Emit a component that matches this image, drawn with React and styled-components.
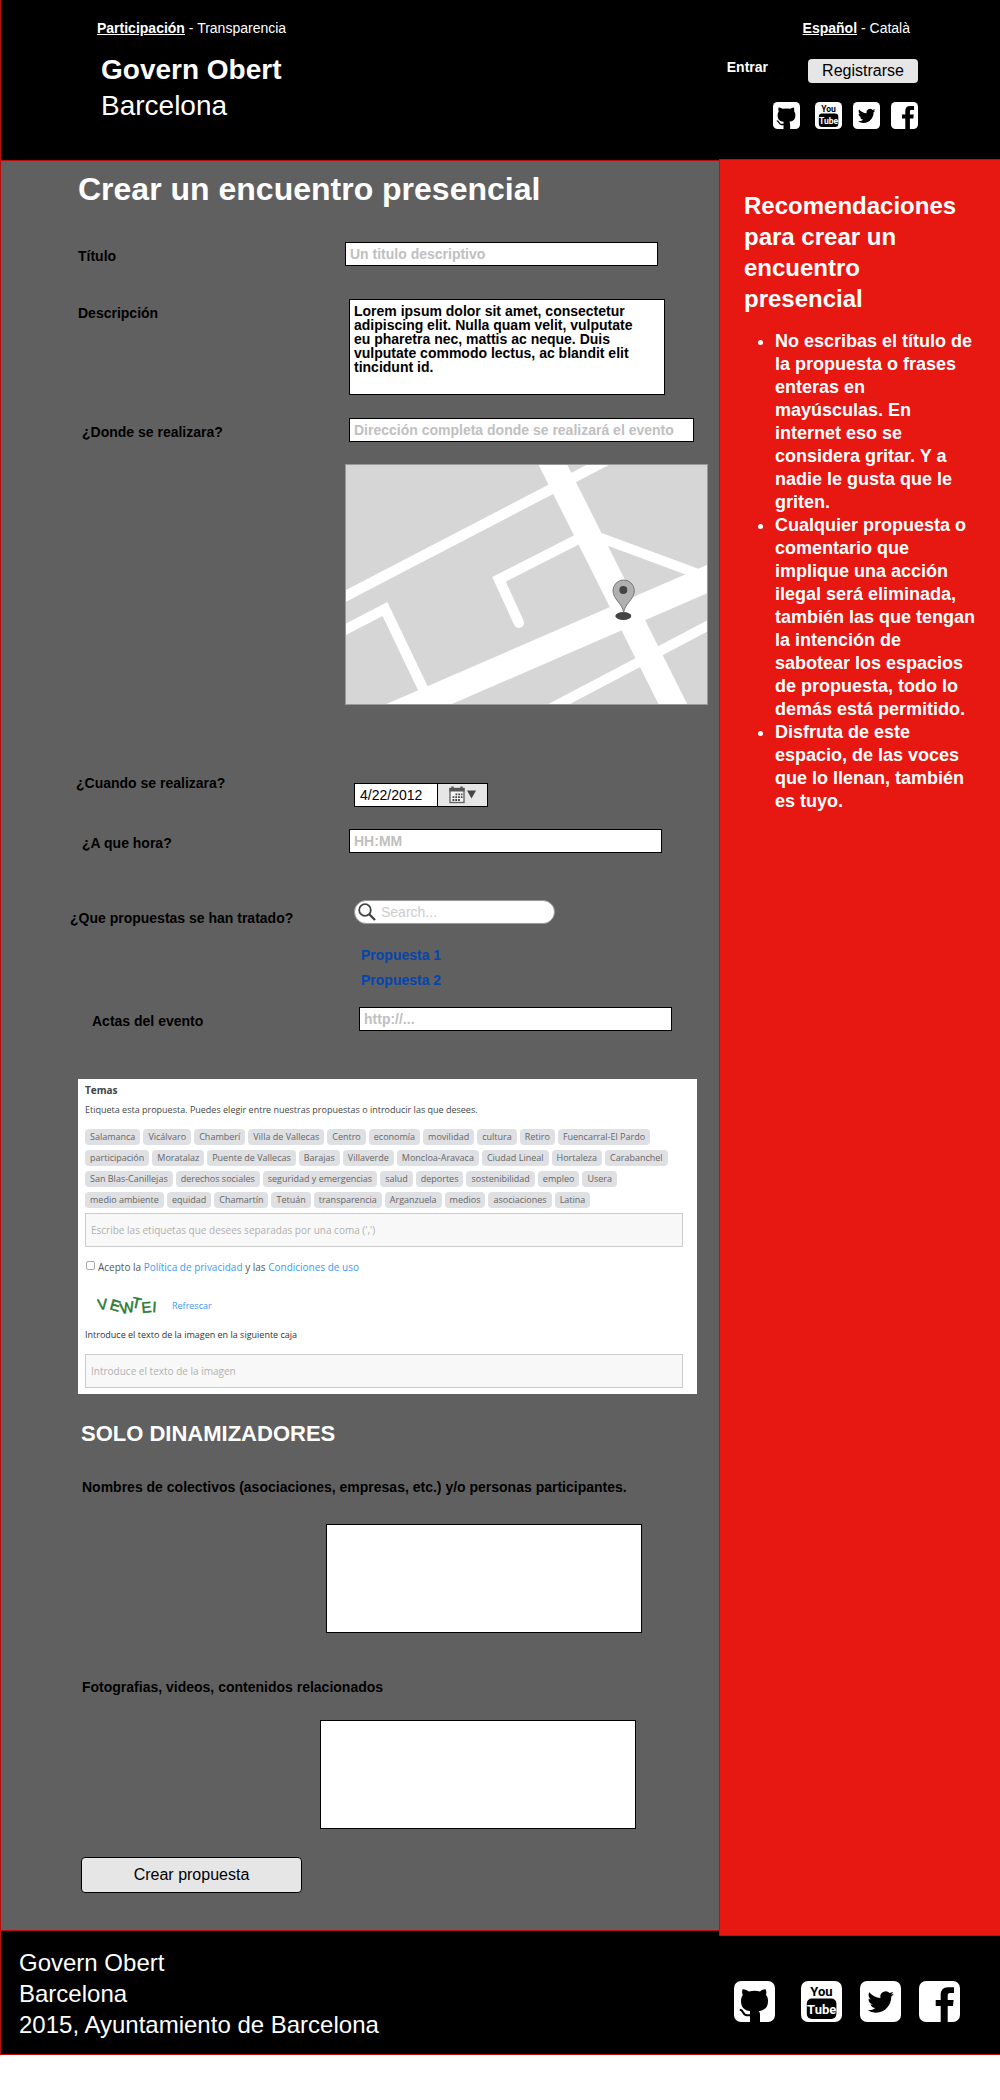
import React from "react";
import styled, { createGlobalStyle } from "styled-components";

const GlobalStyle = createGlobalStyle`
  * { box-sizing: border-box; }
  body {
    margin: 0;
    background: #fff;
    color: #000;
    font: 14px/16px "Liberation Sans", Arial, sans-serif;
  }
  h1, h2, h3, p, ul { margin: 0; padding: 0; }
  input, textarea, button { font-family: inherit; border-radius: 0; }
`;

const line = "#b80d0a";

const Page = styled.div`
  border-left: 1px solid ${line};
`;

/* ---------- header ---------- */

const Header = styled.header`
  display: flex;
  justify-content: space-between;
  height: 161px;
  padding: 20px 82px 0 96px;
  background: #000;
  color: #fff;
  border-bottom: 1px solid ${line};
`;

const Switcher = styled.nav`
  padding-right: ${(p) => (p.$inset ? "8px" : "0")};
  a { color: #fff; text-decoration: none; }
  a[aria-current] { font-weight: bold; text-decoration: underline; }
`;

const Brand = styled.div`
  margin-top: 16px;
  padding-left: 4px;
  font-size: 28px;
  line-height: 36px;
`;

const HeaderTools = styled.div`
  display: flex;
  flex-direction: column;
  align-items: flex-end;
`;

const Account = styled.div`
  display: flex;
  align-items: flex-start;
  gap: 40px;
  margin: 23px 0 19px;
`;

const LoginLink = styled.a`
  color: #fff;
  font-weight: bold;
  text-decoration: none;
`;

const Button = styled.button`
  width: ${(p) => p.$width};
  height: ${(p) => p.$height};
  padding: 0;
  border: ${(p) => (p.$outlined ? "1px solid #000" : "0")};
  border-radius: 4px;
  background: #e6e6e6;
  color: #000;
  font-size: 16px;
`;

const SocialList = styled.ul`
  display: flex;
  gap: ${(p) => p.$gap};
  list-style: none;
  li:first-child { margin-right: ${(p) => p.$lead}; }
  a { display: block; }
  svg { display: block; width: ${(p) => p.$size}; height: ${(p) => p.$size}; }
`;

/* ---------- body ---------- */

const Columns = styled.div`
  display: grid;
  grid-template-columns: minmax(0, 1fr) 281px;
`;

const Main = styled.main`
  padding: 8px 0 37px;
  background: #606060;
`;

const Title = styled.h1`
  padding-left: 77px;
  color: #fff;
  font-size: 32px;
  line-height: 40px;
`;

const Row = styled.div`
  display: grid;
  grid-template-columns: 275px minmax(0, 1fr);
  align-items: start;
  margin-top: ${(p) => p.$gap}px;
  padding-left: 69px;
`;

const Label = styled.label`
  padding-left: ${(p) => p.$indent || 0}px;
  padding-top: ${(p) => p.$drop ?? 6}px;
  font-weight: bold;
`;

const Field = styled.div`
  grid-column: 2;
  padding-left: ${(p) => p.$indent || 0}px;
  padding-top: ${(p) => p.$drop || 0}px;
`;

const TextInput = styled.input`
  display: block;
  width: ${(p) => (p.$wide ? "345px" : "313px")};
  max-width: 100%;
  height: 24px;
  padding: 0 4px;
  border: 1px solid #000;
  background: #fff;
  font-size: 14px;
  font-weight: bold;
  &::placeholder { color: #c0c0c0; opacity: 1; }
`;

const TextArea = styled.textarea`
  display: block;
  width: 316px;
  max-width: 100%;
  height: ${(p) => p.$height};
  padding: 4px 16px 0 4px;
  border: 1px solid #000;
  background: #fff;
  font-size: 14px;
  font-weight: bold;
  line-height: 14px;
  resize: none;
  overflow: hidden;
`;

const MapPicture = styled.svg`
  display: block;
  width: 363px;
  max-width: 100%;
  height: auto;
  border: 1px solid #999;
  background: #d6d6d6;
`;

const DateBox = styled.div`
  display: flex;
  width: 134px;
  height: 24px;
  border: 1px solid #000;
`;

const DateInput = styled.input`
  flex: 1;
  min-width: 0;
  padding: 0 5px;
  border: 0;
  background: #fff;
  font-size: 14px;
`;

const DateButton = styled.button`
  display: flex;
  align-items: center;
  justify-content: center;
  width: 50px;
  padding: 0;
  border: 0;
  border-left: 1px solid #000;
  background: #e6e6e6;
`;

const SearchBox = styled.div`
  display: flex;
  align-items: center;
  gap: 5px;
  width: 201px;
  height: 24px;
  padding: 0 12px 0 3px;
  border: 1px solid #999;
  border-radius: 12px;
  background: #fff;
`;

const SearchInput = styled.input`
  flex: 1;
  min-width: 0;
  padding: 0;
  border: 0;
  background: none;
  font-size: 14px;
  &::placeholder { color: #ccc; opacity: 1; }
`;

const ProposalList = styled.ul`
  list-style: none;
  line-height: 25px;
  a { color: #0645ad; font-weight: bold; text-decoration: none; }
`;

/* ---------- topics panel ---------- */

const Panel = styled.section`
  margin: 48px 22px 0 77px;
  padding: 4px 14px 6px 7px;
  background: #fff;
  color: #444;
  font: 9px/14px "Open Sans", "Noto Sans", sans-serif;
  a { color: #3b9bf0; text-decoration: none; }
`;

const PanelTitle = styled.h3`
  font-size: 10px;
  line-height: 14px;
`;

const PanelHint = styled.p`
  margin-top: 6px;
`;

const Tags = styled.div`
  display: flex;
  flex-wrap: wrap;
  gap: 5px 3px;
  margin: 12px 0 5px;
`;

const Tag = styled.button`
  height: 16px;
  padding: 0 5px;
  border: 0;
  border-radius: 4px;
  background: #dee0e3;
  color: #666;
  font-size: 9px;
  line-height: 16px;
`;

const PanelInput = styled.input`
  display: block;
  width: 100%;
  height: 34px;
  padding: 0 5px;
  border: 1px solid #ccc;
  background: #f8f8f8;
  font-size: 10px;
  &::placeholder { color: #b0b0b0; opacity: 1; }
`;

const Terms = styled.div`
  display: flex;
  align-items: flex-start;
  gap: 3px;
  margin-top: 13px;
  font-size: 10px;
  color: #555;
  input {
    appearance: none;
    width: 9px;
    height: 9px;
    margin: 1px 0 0 1px;
    border: 1px solid #aaa;
    border-radius: 2px;
    background: #fff;
  }
`;

const Captcha = styled.div`
  display: flex;
  align-items: center;
  gap: 15px;
  margin: 19px 0 9px;
  padding-left: 12px;
  svg { display: block; }
`;

const CaptchaLabel = styled.label`
  display: block;
  margin-bottom: 12px;
  color: #333;
`;

/* ---------- moderators ---------- */

const SectionTitle = styled.h2`
  margin: 27px 0 32px;
  padding-left: 80px;
  color: #fff;
  font-size: 22px;
  line-height: 26px;
`;

const Block = styled.div`
  margin-bottom: ${(p) => p.$after}px;
  padding-left: 81px;
`;

const BlockLabel = styled.label`
  display: block;
  margin-bottom: ${(p) => p.$after}px;
  font-weight: bold;
`;

const BlockField = styled.div`
  padding-left: ${(p) => p.$indent}px;
`;

const Actions = styled.div`
  padding-left: 80px;
`;

/* ---------- aside & footer ---------- */

const Aside = styled.aside`
  position: relative;
  z-index: 1;
  margin: -2px 0 -6px;
  padding: 30px 23px 0 24px;
  border: 1px solid #444;
  border-right: 0;
  background: #e71812;
  color: #fff;
`;

const AsideTitle = styled.h2`
  margin-bottom: 16px;
  font-size: 24px;
  line-height: 31px;
`;

const Advice = styled.ul`
  padding-left: 31px;
  font-size: 18px;
  font-weight: bold;
  line-height: 23px;
`;

const Footer = styled.footer`
  display: flex;
  justify-content: space-between;
  align-items: flex-end;
  padding: 16px 40px 14px 18px;
  border-top: 1px solid ${line};
  border-bottom: 1px solid ${line};
  background: #000;
  color: #fff;
  font-size: 24px;
  line-height: 31px;
`;

const FooterSocial = styled.div`
  padding-bottom: 18px;
`;

/* ---------- drawings ---------- */

const Tile = ({ children }) => (
  <svg viewBox="0 0 41 41" aria-hidden="true">
    <rect width="41" height="41" rx="7" fill="#fff" />
    {children}
  </svg>
);

const GithubIcon = () => (
  <Tile>
    <path d="M8.6 8.2C11 8 13.2 9.2 15 10.4Q20.5 9.2 26 10.4C27.8 9.2 30 8 31.6 8.2C32.6 10.4 32.4 12.6 32 14C33.5 15.8 34 17.6 34 20C34 26.8 30.2 29.4 24.6 30C25.8 31.2 26 32.4 26 34V41H16V30C10.6 29.4 7 26.8 7 20C7 17.6 7.6 15.8 8.8 14C8 12.6 7.8 10.4 8.6 8.2Z" />
    <path d="M5.8 28.8C10 29 8.4 34.2 13 34.2H17" fill="none" stroke="#000" strokeWidth="2" />
  </Tile>
);

const YoutubeIcon = () => (
  <Tile>
    <g fontFamily="Roboto, Liberation Sans, sans-serif" fontSize="13" fontWeight="bold" textAnchor="middle">
      <text x="20.5" y="14.8">You</text>
      <rect x="5.8" y="17.6" width="29.6" height="20.4" rx="5" />
      <text x="20.7" y="32.8" fill="#fff">Tube</text>
    </g>
  </Tile>
);

const TwitterIcon = () => (
  <Tile>
    <path
      transform="translate(7.5 7.8) scale(1.1)"
      d="M23.953 4.57a10 10 0 01-2.825.775 4.958 4.958 0 002.163-2.723c-.951.555-2.005.959-3.127 1.184a4.92 4.92 0 00-8.384 4.482C7.69 8.095 4.067 6.13 1.64 3.162a4.822 4.822 0 00-.666 2.475c0 1.71.87 3.213 2.188 4.096a4.904 4.904 0 01-2.228-.616v.06a4.923 4.923 0 003.946 4.827 4.996 4.996 0 01-2.212.085 4.936 4.936 0 004.604 3.417 9.867 9.867 0 01-6.102 2.105c-.39 0-.779-.023-1.17-.067a13.995 13.995 0 007.557 2.209c9.053 0 13.998-7.496 13.998-13.985 0-.21 0-.42-.015-.63A9.935 9.935 0 0024 4.59z"
    />
  </Tile>
);

const FacebookIcon = () => (
  <Tile>
    <path d="M21.7 41V25H16.7V19H21.7V14C21.7 9 24.2 6.2 29 6.2H35V12H31.2C29.2 12 28.7 13 28.7 14.8V19H34.6L34 25H28.7V41Z" />
  </Tile>
);

const networks = [
  ["GitHub", GithubIcon],
  ["YouTube", YoutubeIcon],
  ["Twitter", TwitterIcon],
  ["Facebook", FacebookIcon],
];

const Social = (props) => (
  <SocialList {...props}>
    {networks.map(([name, Icon]) => (
      <li key={name}>
        <a href="#" aria-label={name}><Icon /></a>
      </li>
    ))}
  </SocialList>
);

const StreetMap = () => (
  <MapPicture viewBox="48 45 1083 717" role="img" aria-label="Mapa del lugar">
    <g fill="none" stroke="#fff">
      <path d="M648 3L1050 805" strokeWidth="77" />
      <path d="M180 800L1217 350" strokeWidth="78" />
      <path d="M11 457L872 9" strokeWidth="31" />
      <path d="M11 557L165 477L282 722" strokeWidth="31" />
      <path d="M760 259L507 388L567 519" strokeWidth="31" />
      <path d="M810 263L1110 374" strokeWidth="30" />
      <path d="M627 794L1160 513" strokeWidth="30" />
    </g>
    <circle cx="567" cy="519" r="15" fill="#fff" />
    <ellipse cx="880" cy="498" rx="24" ry="12" fill="#444" />
    <path d="M881 487C877 460 849 448 849 422A32 32 0 0 1 913 422C913 448 885 460 881 487Z" fill="#b0b0b0" stroke="#777" strokeWidth="3" />
    <circle cx="880" cy="420" r="12" fill="#444" />
  </MapPicture>
);

const CalendarIcon = () => (
  <svg width="28" height="18" viewBox="0 0 28 18" aria-hidden="true">
    <rect x="1" y="2.5" width="14" height="14" fill="#f4f4f4" stroke="#666" strokeWidth="1.4" />
    <rect x="0.5" y="2" width="15" height="3.5" fill="#555" />
    <path d="M3.5 0.5V4M12.5 0.5V4" stroke="#555" strokeWidth="2.4" />
    <path d="M6.5 8.4H13.5M3.5 11.2H13.5M3.5 14H11" stroke="#444" strokeWidth="1.8" strokeDasharray="1.8 1" />
    <path d="M18 4.5H27L22.5 12.5Z" fill="#444" />
  </svg>
);

const SearchIcon = () => (
  <svg width="18" height="18" viewBox="0 0 18 18" aria-hidden="true" fill="none" stroke="#444">
    <circle cx="7" cy="7" r="5.8" strokeWidth="1.8" />
    <path d="M11 11L17 17" strokeWidth="2.4" />
  </svg>
);

const CaptchaPicture = () => (
  <svg width="60" height="26" viewBox="0 0 60 26" role="img" aria-label="Imagen de verificación">
    <text
      x="1 12 24 34 45 55"
      y="17 16 21 14 20 19"
      rotate="-6 16 -10 12 -6 4"
      fill="#2c7a2c"
      stroke="#2c7a2c"
      strokeWidth="0.5"
      fontFamily="Liberation Sans, Arial, sans-serif"
      fontSize="15"
    >
      VEWTEI
    </text>
  </svg>
);

/* ---------- content ---------- */

const tags = [
  "Salamanca", "Vicálvaro", "Chamberí", "Villa de Vallecas", "Centro", "economía", "movilidad",
  "cultura", "Retiro", "Fuencarral-El Pardo", "participación", "Moratalaz", "Puente de Vallecas",
  "Barajas", "Villaverde", "Moncloa-Aravaca", "Ciudad Lineal", "Hortaleza", "Carabanchel",
  "San Blas-Canillejas", "derechos sociales", "seguridad y emergencias", "salud", "deportes",
  "sostenibilidad", "empleo", "Usera", "medio ambiente", "equidad", "Chamartín", "Tetuán",
  "transparencia", "Arganzuela", "medios", "asociaciones", "Latina",
];

const advice = [
  "No escribas el título de la propuesta o frases enteras en mayúsculas. En internet eso se considera gritar. Y a nadie le gusta que le griten.",
  "Cualquier propuesta o comentario que implique una acción ilegal será eliminada, también las que tengan la intención de sabotear los espacios de propuesta, todo lo demás está permitido.",
  "Disfruta de este espacio, de las voces que lo llenan, también es tuyo.",
];

const description =
  "Lorem ipsum dolor sit amet, consectetur adipiscing elit. Nulla quam velit, vulputate eu pharetra nec, mattis ac neque. Duis vulputate commodo lectus, ac blandit elit tincidunt id.";

export default function App() {
  return (
    <Page>
      <GlobalStyle />
      <Header>
        <div>
          <Switcher aria-label="Secciones">
            <a href="#" aria-current="page">Participación</a> - <a href="#">Transparencia</a>
          </Switcher>
          <Brand>
            <strong>Govern Obert</strong>
            <div>Barcelona</div>
          </Brand>
        </div>
        <HeaderTools>
          <Switcher $inset aria-label="Idioma">
            <a href="#" aria-current="true">Español</a> - <a href="#">Català</a>
          </Switcher>
          <Account>
            <LoginLink href="#">Entrar</LoginLink>
            <Button type="button" $width="110px" $height="24px">Registrarse</Button>
          </Account>
          <Social $size="27px" $gap="11px" $lead="4px" />
        </HeaderTools>
      </Header>

      <Columns>
        <Main>
          <form onSubmit={(e) => e.preventDefault()}>
            <Title>Crear un encuentro presencial</Title>

            <Row $gap={33}>
              <Label $indent={8} htmlFor="titulo">Título</Label>
              <Field><TextInput id="titulo" placeholder="Un titulo descriptivo" /></Field>
            </Row>
            <Row $gap={33}>
              <Label $indent={8} htmlFor="descripcion">Descripción</Label>
              <Field $indent={4}>
                <TextArea id="descripcion" $height="96px" spellCheck={false} defaultValue={description} />
              </Field>
            </Row>
            <Row $gap={23}>
              <Label $indent={12} htmlFor="lugar">¿Donde se realizara?</Label>
              <Field $indent={4}>
                <TextInput id="lugar" $wide placeholder="Dirección completa donde se realizará el evento" />
              </Field>
            </Row>
            <Row $gap={22}>
              <Field><StreetMap /></Field>
            </Row>
            <Row $gap={70}>
              <Label $indent={6} $drop={0} htmlFor="fecha">¿Cuando se realizara?</Label>
              <Field $indent={9} $drop={8}>
                <DateBox>
                  <DateInput id="fecha" defaultValue="4/22/2012" />
                  <DateButton type="button" aria-label="Abrir calendario"><CalendarIcon /></DateButton>
                </DateBox>
              </Field>
            </Row>
            <Row $gap={22}>
              <Label $indent={12} htmlFor="hora">¿A que hora?</Label>
              <Field $indent={4}><TextInput id="hora" placeholder="HH:MM" /></Field>
            </Row>
            <Row $gap={47}>
              <Label $drop={10} htmlFor="propuestas">¿Que propuestas se han tratado?</Label>
              <Field $indent={9}>
                <SearchBox>
                  <SearchIcon />
                  <SearchInput id="propuestas" placeholder="Search..." />
                </SearchBox>
              </Field>
            </Row>
            <Row $gap={17}>
              <Field $indent={16}>
                <ProposalList>
                  <li><a href="#">Propuesta 1</a></li>
                  <li><a href="#">Propuesta 2</a></li>
                </ProposalList>
              </Field>
            </Row>
            <Row $gap={14}>
              <Label $indent={22} htmlFor="actas">Actas del evento</Label>
              <Field $indent={14}><TextInput id="actas" placeholder="http://..." /></Field>
            </Row>

            <Panel>
              <PanelTitle>Temas</PanelTitle>
              <PanelHint>
                Etiqueta esta propuesta. Puedes elegir entre nuestras propuestas o introducir las que desees.
              </PanelHint>
              <Tags>
                {tags.map((t) => <Tag key={t} type="button">{t}</Tag>)}
              </Tags>
              <PanelInput aria-label="Etiquetas" placeholder="Escribe las etiquetas que desees separadas por una coma (',')" />
              <Terms>
                <input type="checkbox" id="acepto" />
                <label htmlFor="acepto">
                  Acepto la <a href="#">Política de privacidad</a> y las <a href="#">Condiciones de uso</a>
                </label>
              </Terms>
              <Captcha>
                <CaptchaPicture />
                <a href="#">Refrescar</a>
              </Captcha>
              <CaptchaLabel htmlFor="captcha">Introduce el texto de la imagen en la siguiente caja</CaptchaLabel>
              <PanelInput id="captcha" placeholder="Introduce el texto de la imagen" />
            </Panel>

            <SectionTitle>SOLO DINAMIZADORES</SectionTitle>
            <Block $after={46}>
              <BlockLabel $after={29} htmlFor="colectivos">
                Nombres de colectivos (asociaciones, empresas, etc.) y/o personas participantes.
              </BlockLabel>
              <BlockField $indent={244}><TextArea id="colectivos" $height="109px" /></BlockField>
            </Block>
            <Block $after={28}>
              <BlockLabel $after={25} htmlFor="contenidos">Fotografias, videos, contenidos relacionados</BlockLabel>
              <BlockField $indent={238}><TextArea id="contenidos" $height="109px" /></BlockField>
            </Block>
            <Actions>
              <Button type="submit" $outlined $width="221px" $height="36px">Crear propuesta</Button>
            </Actions>
          </form>
        </Main>

        <Aside>
          <AsideTitle>Recomendaciones para crear un encuentro presencial</AsideTitle>
          <Advice>
            {advice.map((a) => <li key={a}>{a}</li>)}
          </Advice>
        </Aside>
      </Columns>

      <Footer>
        <div>
          <p>Govern Obert</p>
          <p>Barcelona</p>
          <p>2015, Ayuntamiento de Barcelona</p>
        </div>
        <FooterSocial>
          <Social $size="41px" $gap="18px" $lead="8px" />
        </FooterSocial>
      </Footer>
    </Page>
  );
}
